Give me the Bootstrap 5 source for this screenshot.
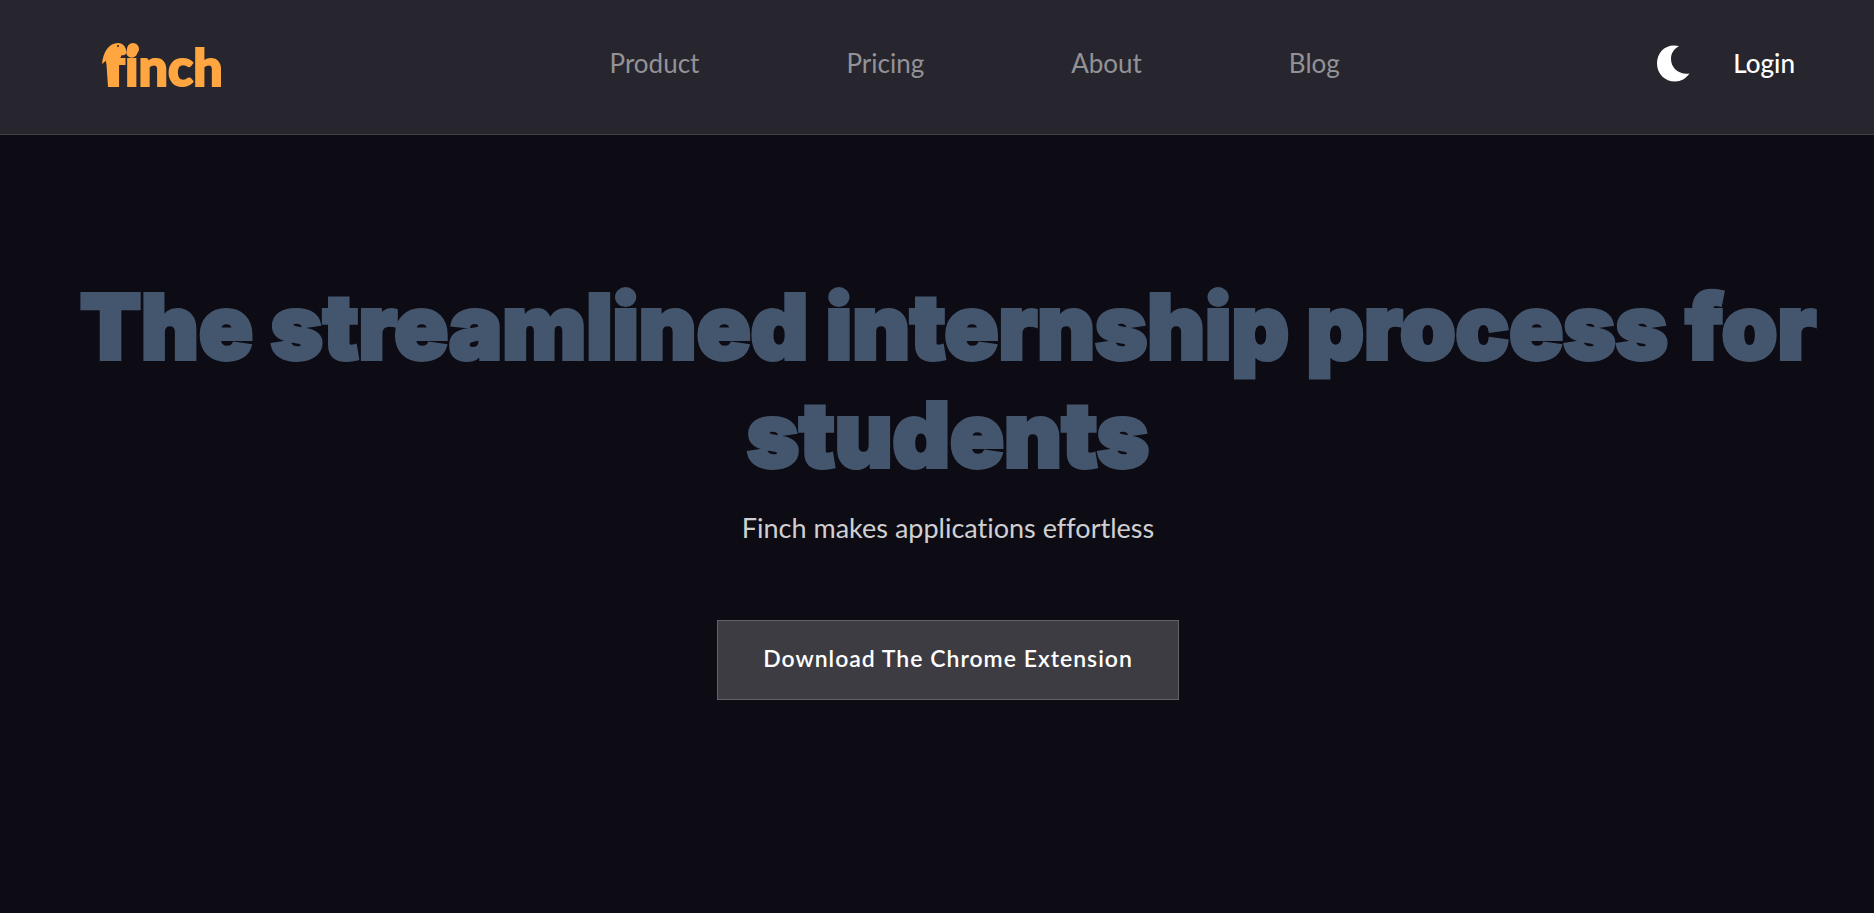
<!DOCTYPE html>
<html lang="en">
<head>
<meta charset="utf-8">
<meta name="viewport" content="width=device-width, initial-scale=1">
<title>Finch</title>
<link href="https://cdn.jsdelivr.net/npm/bootstrap@5.3.0/dist/css/bootstrap.min.css" rel="stylesheet">
<style>
body { background: #0d0c14; color: #d0d0d2; font-family: Lato, sans-serif; font-size: 26px; line-height: 32px; font-variant-ligatures: none; }
.site-nav { background: #27262e; border-bottom: 1px solid #424147; min-height: 135px; padding: 0 79px 8px 100px; }
.brand-link { margin-right: 60px; }
.brand-link text { font-family: Lato, sans-serif; font-weight: 900; font-size: 52px; fill: #ffa640; stroke: #ffa640; stroke-width: 2px; }
.menu { gap: 147px; }
.menu a { color: #939297; }
.login-link { color: #fff; font-weight: 500; }
.account { gap: 43px; }
.theme-btn { color: #fff; line-height: 0; }
.hero { padding: 138px 24px 64px 46px; }
.hero h1 { font-family: Inter, sans-serif; font-weight: 900; font-size: 89px; line-height: 108px; color: #44566e; -webkit-text-stroke: 4px #44566e; }
.hero-copy { margin: 23px 0 76px; font-size: 27px; }
.download-btn { background: #3e3c43; border: 1px solid #646269; border-radius: 0; color: #fff; font-weight: 600; font-size: 23px; line-height: 32px; letter-spacing: 1px; padding: 21px 45px 25px; }
.download-btn:hover { background: #4b4950; color: #fff; }
</style>
</head>
<body>
<nav class="site-nav d-flex flex-wrap align-items-center justify-content-between">
  <a class="brand-link" href="#" aria-label="Finch home">
    <svg class="d-block overflow-visible" width="132" height="56" viewBox="0 0 132 56">
      <text x="6" y="51">f<tspan x="25">inch</tspan></text>
      <path fill="#ffa640" d="M2 29C3 17 9 8 18 8c6 0 9 5 8 12l-2-4-5 1c3 1 3 5 0 7H8zM6 22h12v30H8z"/>
      <circle cx="33" cy="14" r="6" fill="#ffa640"/>
      <circle cx="18" cy="11" r="1" fill="#27262e"/>
    </svg>
  </a>
  <div class="menu d-flex flex-wrap">
    <a class="text-decoration-none" href="#">Product</a>
    <a class="text-decoration-none" href="#">Pricing</a>
    <a class="text-decoration-none" href="#">About</a>
    <a class="text-decoration-none" href="#">Blog</a>
  </div>
  <div class="account d-flex align-items-center">
    <button class="theme-btn btn border-0 p-0" type="button" aria-label="Toggle dark mode">
      <svg width="33" height="37" viewBox="0 0 33 37"><path fill="currentColor" d="M22 1C9-2 0 7 0 18.500C0 29 8 36.500 18 36.500c6 0 11-3 14.500-8C22 30 14 23 14 14c0-6 3-10 8-13z"/></svg>
    </button>
    <a class="login-link text-decoration-none" href="#">Login</a>
  </div>
</nav>
<main class="hero text-center">
  <h1 class="mb-0">The streamlined internship process for students</h1>
  <p class="hero-copy">Finch makes applications effortless</p>
  <button class="download-btn btn" type="button">Download The Chrome Extension</button>
</main>
<script src="https://cdn.jsdelivr.net/npm/bootstrap@5.3.0/dist/js/bootstrap.bundle.min.js"></script>
</body>
</html>
